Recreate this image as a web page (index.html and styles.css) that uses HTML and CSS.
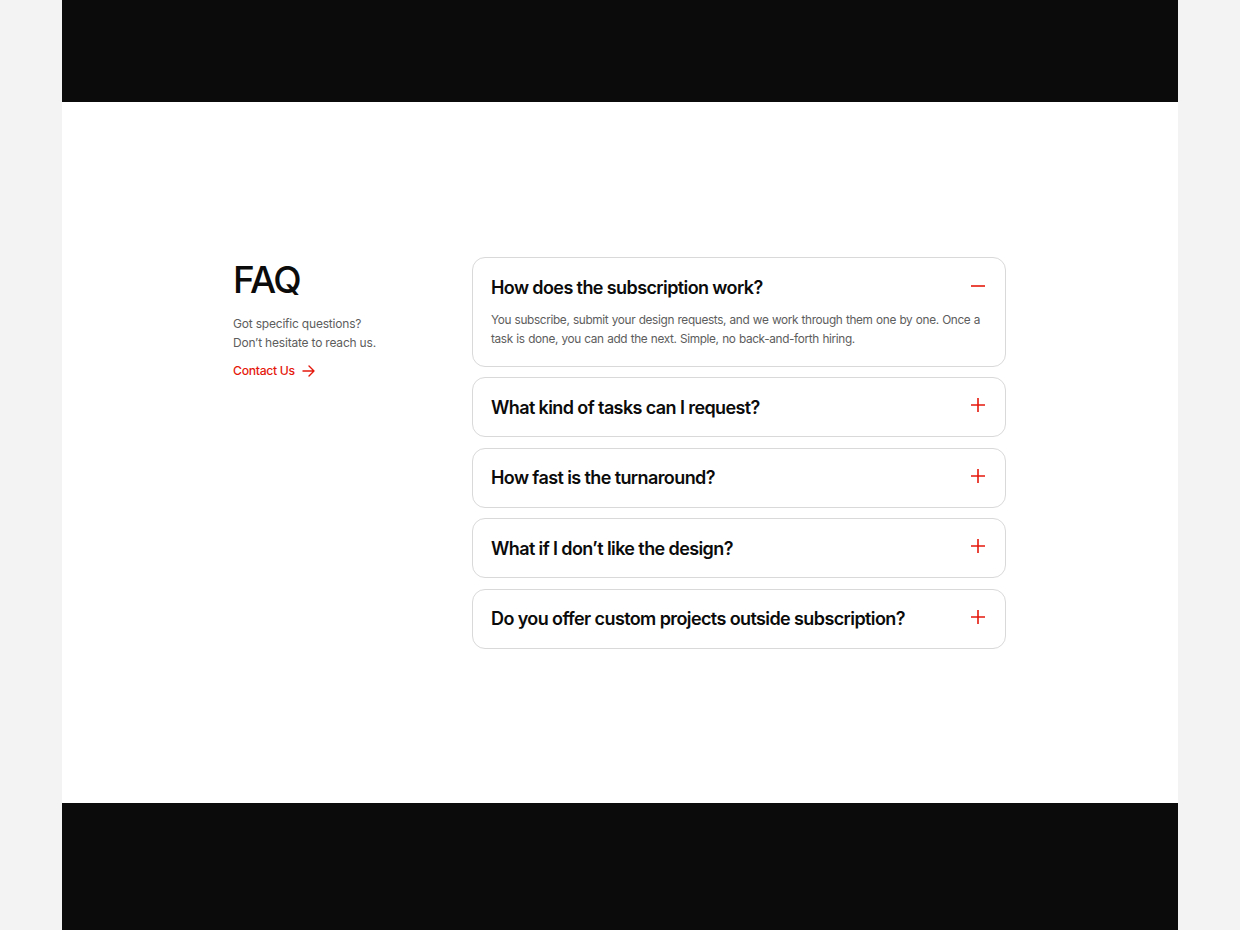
FILE: index.html
```html
<!DOCTYPE html>
<html lang="en">
<head>
  <meta charset="utf-8">
  <meta name="viewport" content="width=device-width, initial-scale=1.0">
  <title>FAQ</title>
  <link rel="stylesheet" href="styles.css">
</head>
<body>
  <div class="page">
    <!-- Top band -->
    <div class="band band-top"></div>

    <!-- FAQ section -->
    <section class="faq">
      <div class="faq-inner">
        <div class="faq-intro">
          <h1>FAQ</h1>
          <p>Got specific questions?<br>Don’t hesitate to reach us.</p>
          <a class="contact-link" href="#">Contact Us
            <svg width="13" height="12" viewBox="0 0 13 12" fill="none" stroke="currentColor" stroke-width="1.4" stroke-linecap="round" stroke-linejoin="round">
              <path d="M1 6h11M7 1l5 5-5 5"/>
            </svg>
          </a>
        </div>

        <div class="faq-list">
          <div class="faq-item open">
            <div class="faq-question">
              <span>How does the subscription work?</span>
              <svg class="faq-icon" width="14" height="14" viewBox="0 0 14 14"><path d="M0 7h14" stroke="#e5180c" stroke-width="1.6"/></svg>
            </div>
            <p class="faq-answer">You subscribe, submit your design requests, and we work through them one by one. Once a task is done, you can add the next. Simple, no back-and-forth hiring.</p>
          </div>
          <div class="faq-item">
            <div class="faq-question">
              <span>What kind of tasks can I request?</span>
              <svg class="faq-icon plus" width="14" height="14" viewBox="0 0 14 14"><path d="M0 7h14M7 0v14" stroke="#e5180c" stroke-width="1.6"/></svg>
            </div>
          </div>
          <div class="faq-item">
            <div class="faq-question">
              <span>How fast is the turnaround?</span>
              <svg class="faq-icon plus" width="14" height="14" viewBox="0 0 14 14"><path d="M0 7h14M7 0v14" stroke="#e5180c" stroke-width="1.6"/></svg>
            </div>
          </div>
          <div class="faq-item">
            <div class="faq-question">
              <span>What if I don’t like the design?</span>
              <svg class="faq-icon plus" width="14" height="14" viewBox="0 0 14 14"><path d="M0 7h14M7 0v14" stroke="#e5180c" stroke-width="1.6"/></svg>
            </div>
          </div>
          <div class="faq-item">
            <div class="faq-question">
              <span>Do you offer custom projects outside subscription?</span>
              <svg class="faq-icon plus" width="14" height="14" viewBox="0 0 14 14"><path d="M0 7h14M7 0v14" stroke="#e5180c" stroke-width="1.6"/></svg>
            </div>
          </div>
        </div>
      </div>
    </section>

    <!-- Bottom band -->
    <div class="band band-bottom"></div>
  </div>
</body>
</html>
```

FILE: styles.css
```css
body {
  margin: 0;
  background-color: #f3f3f3;
  font-family: Inter, "Noto Sans", Arial, sans-serif;
  color: #0b0b0b;
}

.page {
  width: 1116px;
  margin: 0 auto;
}

.band {
  background-color: #0b0b0b;
}

.band-top {
  height: 102px;
}

.band-bottom {
  height: 127px;
}

.faq {
  background-color: #fff;
  height: 701px;
  display: flex;
  align-items: flex-start;
  justify-content: center;
  padding-top: 155px;
  box-sizing: border-box;
}

.faq-inner {
  display: flex;
  width: 773px;
  margin-left: -1px;
}

.faq-intro {
  width: 239px;
  flex-shrink: 0;
}

.faq-intro h1 {
  font-size: 37px;
  font-weight: 500;
  letter-spacing: -1.5px;
  margin: 1px 0 0;
  line-height: 44px;
}

.faq-intro p {
  font-size: 12px;
  line-height: 19px;
  color: #5d5d5d;
  margin: 12px 0 7px;
  letter-spacing: -0.2px;
}

.contact-link {
  display: inline-flex;
  align-items: center;
  gap: 7px;
  color: #e5180c;
  font-size: 12.2px;
  font-weight: 500;
  text-decoration: none;
  letter-spacing: -0.3px;
}

.faq-list {
  flex: 1;
  display: flex;
  flex-direction: column;
  gap: 10.5px;
}

.faq-item {
  border: 1px solid #d9d9d9;
  border-radius: 13px;
  padding: 0 20px 0 18px;
}

.faq-question {
  height: 58px;
  display: flex;
  align-items: center;
  justify-content: space-between;
  font-size: 18px;
  font-weight: 600;
  letter-spacing: -0.6px;
}

.faq-answer {
  margin: -5px 0 16.5px;
  font-size: 11.8px;
  line-height: 19px;
  color: #5d5d5d;
  letter-spacing: -0.35px;
  word-spacing: 0.5px;
}

.faq-icon {
  flex-shrink: 0;
  position: relative;
  top: -1px;
}

.faq-icon.plus {
  top: -2px;
}
```
